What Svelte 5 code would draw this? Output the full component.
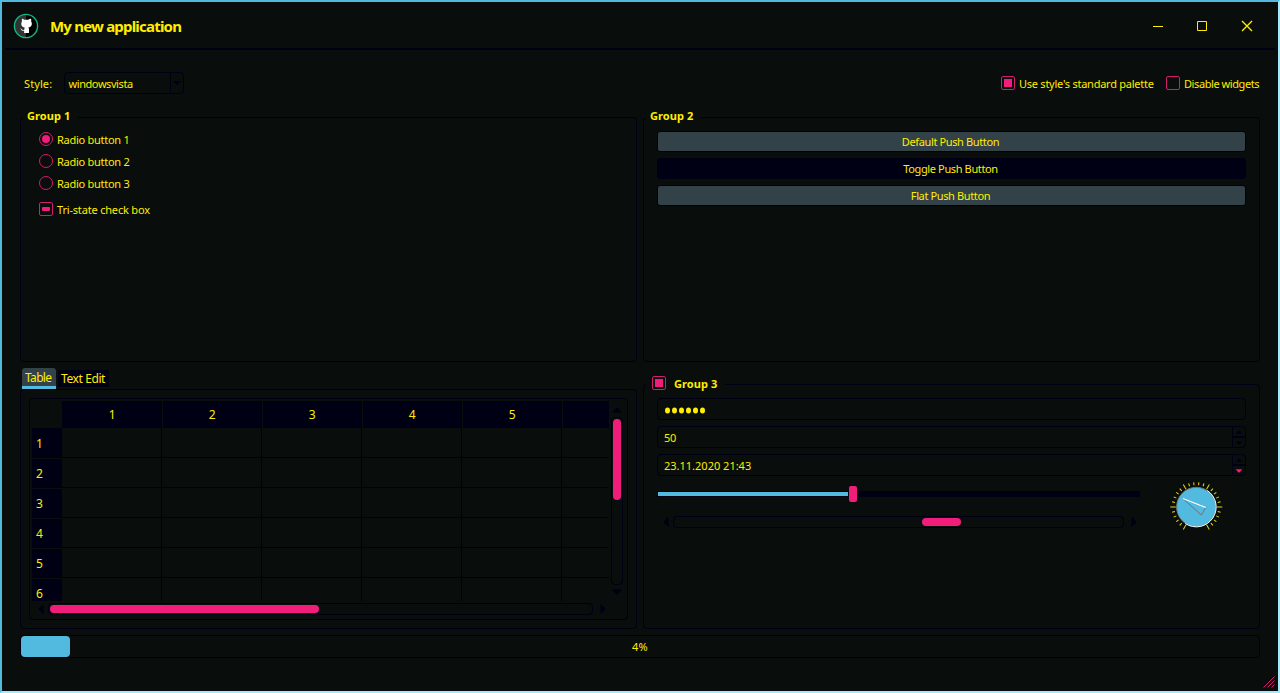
<script>
  const radios = ['Radio button 1', 'Radio button 2', 'Radio button 3'];
  const columns = [1, 2, 3, 4, 5, ''];
  const rows = [1, 2, 3, 4, 5, 6];
  const ticks = Array.from({ length: 26 }, (_, i) => ({
    angle: 120 + i * 12,
    major: i % 5 === 0
  }));
</script>

{#snippet arrow(dir, color = '#000014')}
  <svg class="arrow {dir}" width="10" height="6" viewBox="0 0 10 6"><path d="M0 5.5 4.2 0.7h1.6L10 5.5z" fill={color} /></svg>
{/snippet}

<div class="window">
  <header>
    <svg class="logo" width="26" height="26" viewBox="0 0 26 26">
      <circle cx="13" cy="13" r="11.6" fill="#000" />
      <path d="M13 1.4a11.6 11.6 0 0 0 0 23.2z" fill="#333" />
      <circle cx="13" cy="13" r="11.6" fill="none" stroke="#10b981" stroke-width="1.4" />
      <path d="M8.600 5.700c1-.1 2 .5 2.700 1.100h4c.8-.6 1.700-1.200 2.700-1.100.4 1 .3 1.800.1 2.500 1.500 2.400.9 5.800-2.800 6.400.6.600.7 1.200.7 2v3.400h-4.900v-2.300c-1.900.4-2.400-.4-2.900-1.200-.3-.5-.6-.7-.9-1 1.300-.2 1.600.8 2.200 1.300.5.400 1 .3 1.600.1.100-.900.300-1.600.800-2.200-3.800-.7-4.300-4-2.900-6.500-.2-.8-.3-1.600 0-2.500z" fill="#fff" />
    </svg>
    <h1>My new application</h1>
    <svg class="controls" width="102" height="12" viewBox="0 0 102 12" fill="none" stroke="#ffee00">
      <path d="M1 6.500h10M45.500 1.500h9v9h-9z" />
      <path d="m90 1 10 10m0-10-10 10" stroke-width="1.400" />
    </svg>
  </header>

  <main>
    <div class="toolbar">
      <span class="t style-label">Style:</span>
      <div class="combo"><span class="t">windowsvista</span><i>{@render arrow('down')}</i></div>
      <span class="check on"></span><span class="t palette">Use style's standard palette</span>
      <span class="check"></span><span class="t disable">Disable widgets</span>
    </div>

    <div class="groups">
      <section class="group first">
        <h2>Group 1</h2>
        {#each radios as label, i}
          <div class="choice"><span class="radio" class:on={i === 0}></span><span class="t">{label}</span></div>
        {/each}
        <div class="choice tri"><span class="check partial"></span><span class="t">Tri-state check box</span></div>
      </section>

      <section class="group second">
        <h2>Group 2</h2>
        <button>Default Push Button</button>
        <button class="down">Toggle Push Button</button>
        <button>Flat Push Button</button>
      </section>

      <section class="tabs">
        <nav><span class="tab active">Table</span><span class="tab">Text Edit</span></nav>
        <div class="pane">
          <div class="table">
            <div class="view">
              <div class="row head"><b class="corner"></b>{#each columns as c}<b>{c}</b>{/each}</div>
              {#each rows as r}
                <div class="row"><b>{r}</b>{#each columns as _}<i></i>{/each}</div>
              {/each}
            </div>
            <div class="vbar">{@render arrow('up')}<div class="groove"><div class="handle"></div></div>{@render arrow('down')}</div>
            <div class="hbar">{@render arrow('left')}<div class="groove"><div class="handle"></div></div>{@render arrow('right')}</div>
          </div>
        </div>
      </section>

      <section class="group third">
        <h2><span class="check on"></span><span>Group 3</span></h2>
        <div class="field password"><svg width="44" height="8" viewBox="0 0 44 8" fill="#ffee00">{#each [0, 1, 2, 3, 4, 5] as i}<ellipse cx={3.500 + i * 7} cy="4.500" rx="2.500" ry="2.900" />{/each}</svg></div>
        <div class="field"><span class="t">50</span><div class="spin"><i>{@render arrow('up')}</i><i>{@render arrow('down')}</i></div></div>
        <div class="field date"><span class="t">23.11.2020 21:43</span><div class="spin"><i>{@render arrow('up')}</i><i>{@render arrow('down', '#f01d7b')}</i></div></div>
        <div class="bottom">
          <div class="sliders">
            <div class="slider"><div class="filled"></div><div class="knob"></div><div class="rest"></div></div>
            <div class="hbar">{@render arrow('left')}<div class="groove"><div class="handle"></div></div>{@render arrow('right')}</div>
          </div>
          <svg class="dial" width="56" height="56" viewBox="-28.300 -28 56 56">
            {#each ticks as k}
              <path d="M{k.major ? 20.500 : 21.800} 0H{k.major ? 26 : 24.800}" transform="rotate({k.angle})" stroke="#e8dc10" stroke-width="1" />
            {/each}
            <circle r="19.700" fill="#51bade" stroke="#6d7779" />
            <path d="M11-16.500A19.700 19.700 0 0 1-11 16.500" fill="none" stroke="#eefaff" />
            <path d="M-13.500-8.500 5 8 9.500.500" fill="none" stroke="#66777c" />
            <path d="M-13.500-8.500 9.500.500" stroke="#fff" stroke-width="1.200" />
          </svg>
        </div>
      </section>
    </div>

    <div class="progress"><div class="chunk"></div><span class="t">4%</span></div>
  </main>
  <svg class="grip" width="12" height="12" viewBox="0 0 12 12" stroke="#d31c6c"><path d="M.5 11.500 11.500.500M4.500 11.500l7-7M8.500 11.500l3-3" /></svg>
</div>

<style>
  :global(body) { background: #090d0b; }
  .window, .window * { box-sizing: border-box; }
  .window {
    width: 1280px; height: 693px; overflow: hidden; position: relative;
    border: 2px solid; border-color: #51bade #a4e8fb #a4e8fb #51bade;
    background: #090d0b; color: #ffee00;
    font: 11px/14px "Noto Sans", sans-serif;
    white-space: nowrap; --navy: #000014; --pink: #f01d7b; --blue: #51bade;
  }
  svg { display: block; flex: none; }
  h1, h2 { margin: 0; font-weight: 700; }
  header { height: 48px; margin: 0 3px; padding: 2px 21px 0 8px; display: flex; align-items: center; border-bottom: 2px solid var(--navy); }
  h1 { font-size: 15px; line-height: 20px; margin-left: 11px; letter-spacing: -.8px; }
  .controls { margin-left: auto; }
  main { padding: 22px 18px 0; }
  .toolbar { height: 22px; display: flex; align-items: center; padding-left: 4px; }
  .t { display: block; letter-spacing: -.27px; padding-top: 2px; }
  .style-label { width: 40px; letter-spacing: .1px; }
  .combo { width: 120px; height: 22px; border: 1px solid var(--navy); border-radius: 4px; display: flex; align-items: center; padding-left: 3px; margin-right: auto; }
  .combo .t { letter-spacing: -.42px; padding-left: .5px; }
  .combo i { width: 13px; height: 20px; border-left: 1px solid var(--navy); margin-left: auto; display: grid; place-items: center; }
  .combo .arrow { width: 8px; }
  .check { width: 14px; height: 14px; flex: none; border: 1px solid #d31c6c; border-radius: 2px; display: grid; place-items: center; }
  .check.on::after { content: ""; width: 8px; height: 8px; background: var(--pink); }
  .check.partial::after { content: ""; width: 8px; height: 4px; border-radius: 1px; background: var(--pink); }
  .palette { margin-left: 4px; width: 147px; letter-spacing: -.25px; }
  .disable { margin-left: 4px; width: 76px; letter-spacing: -.42px; }
  .groups { display: grid; grid-template-columns: 617px 617px; column-gap: 6px; grid-template-rows: 268px 267px; }
  .group { border: 1px solid var(--navy); border-radius: 4px; height: 245px; margin-top: 23px; display: flex; flex-direction: column; }
  h2 { font-size: 11px; line-height: 14px; height: 14px; margin: -9px 0 0 2px; padding: 0 8px 0 4px; background: #090d0b; align-self: flex-start; display: flex; align-items: center; letter-spacing: .08px; }
  .choice { display: flex; gap: 4px; align-items: center; height: 22px; padding-left: 18px; }
  .first h2 { margin-bottom: 5px; }
  .tri { margin-top: 4px; }
  .tri .t { letter-spacing: -.18px; }
  .radio { width: 14px; height: 14px; border: 1px solid #d31c6c; border-radius: 50%; display: grid; place-items: center; }
  .radio.on::after { content: ""; width: 8px; height: 8px; border-radius: 50%; background: var(--pink); }
  .second h2 { margin-bottom: 8px; }
  button { margin: 0 13px 6px; height: 21px; border: 1px solid var(--navy); border-radius: 3px; background: #334148; color: inherit; font: inherit; padding: 0 2px 0 0; letter-spacing: -.37px; }
  button.down { background: var(--navy); }
  .tabs { padding-top: 6px; }
  nav { height: 21px; display: flex; gap: 2px; padding-left: 2px; align-items: center; font-size: 12px; }
  .tab { height: 17px; line-height: 18px; width: 51px; padding-left: 3px; background: var(--navy); border-radius: 3px 3px 0 0; letter-spacing: -.4px; }
  .tab.active { height: 21px; line-height: 20px; width: 34px; background: #334148; border-bottom: 3px solid var(--blue); letter-spacing: -.65px; }
  .pane { height: 240px; border: 1px solid var(--navy); border-radius: 4px; padding: 8px; }
  .table { height: 222px; border: 1px solid var(--navy); border-radius: 4px; padding: 2px; display: grid; grid-template-columns: 577px 18px; grid-template-rows: 200px 18px; }
  .view { overflow: hidden; }
  .row { display: flex; height: 30px; }
  .row > * { flex: none; width: 100px; border-right: 1px solid var(--navy); border-bottom: 1px solid var(--navy); }
  .row b { font-weight: 400; font-size: 12px; background: var(--navy); border: 0; border-top: 1px solid #090d0b; width: 30px; padding-left: 4px; line-height: 30px; letter-spacing: -.5px; }
  .row:nth-child(2) b { border-top-color: var(--navy); }
  .row.head { height: 27px; }
  .row.head b { width: 100px; text-align: center; line-height: 28px; border: 0; border-left: 1px solid #090d0b; padding: 0 1px 0 0; }
  .row.head b:nth-child(2) { border-color: var(--navy); }
  .row.head .corner { width: 30px; background: none; }
  .arrow.down { transform: rotate(180deg); }
  .arrow.left { transform: rotate(-90deg); }
  .arrow.right { transform: rotate(90deg); }
  .groove { border: 1px solid var(--navy); border-radius: 4px; padding: 1px; }
  .handle { background: var(--pink); border-radius: 4px; width: 8px; height: 8px; }
  .vbar { padding: 6px 0 0 2px; width: 14px; height: 194px; display: flex; flex-direction: column; justify-content: space-between; align-items: center; }
  .vbar .groove { width: 12px; height: 168px; }
  .vbar .handle { height: 81px; }
  .hbar { display: flex; height: 12px; margin-top: 2px; align-items: center; padding-left: 4px; }
  .hbar .groove { width: 545px; height: 12px; margin: 0 5px 0 2px; }
  .hbar .handle { width: 269px; }
  .third { margin-top: 22px; }
  .third h2 { padding-left: 6px; margin-bottom: 8px; }
  .third h2 .check { margin-right: 8px; }
  .third h2 span:last-child { padding-top: 1px; }
  .field { margin: 0 13px 6px; height: 22px; border: 1px solid var(--navy); border-radius: 4px; display: flex; align-items: center; padding-left: 6px; }
  .password { padding-top: 1px; }
  .date .t { letter-spacing: 0; }
  .spin { margin-left: auto; width: 13px; height: 20px; border-left: 1px solid var(--navy); display: grid; grid-template-rows: 10px 10px; }
  .spin i { display: grid; place-items: center; }
  .spin i:first-child { border-bottom: 1px solid var(--navy); }
  .spin i:last-child { border-top: 1px solid var(--navy); }
  .spin .arrow { width: 8px; height: 4px; }
  .bottom { display: flex; padding-left: 13px; }
  .sliders { width: 483px; padding-top: 4px; }
  .slider { display: flex; align-items: center; height: 16px; }
  .filled { width: 192px; height: 6px; background: var(--blue); border: 1px solid var(--navy); }
  .knob { width: 8px; height: 16px; border-radius: 2px; background: var(--pink); }
  .rest { flex: 1; height: 6px; background: var(--navy); }
  .sliders .hbar { margin-top: 14px; }
  .sliders .groove { width: 451px; padding-left: 248px; }
  .sliders .handle { width: 39px; }
  .dial { margin: -3px 0 0 28px; }
  .progress { height: 23px; margin-top: 6px; border: 1px solid var(--navy); border-radius: 4px; display: flex; align-items: center; }
  .chunk { width: 49px; height: 21px; background: var(--blue); border-radius: 4px; }
  .progress .t { margin-left: 562px; padding-top: 1px; letter-spacing: .2px; }
  .grip { position: absolute; right: 3px; bottom: 3px; }
</style>
